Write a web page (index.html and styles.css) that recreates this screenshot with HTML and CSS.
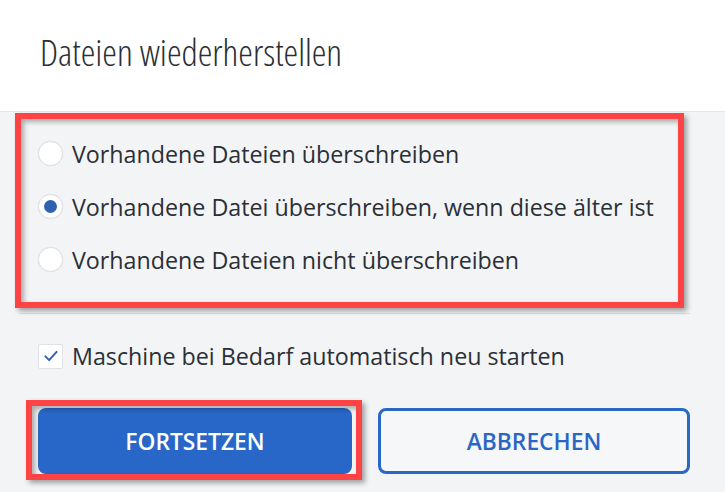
FILE: index.html
```html
<!DOCTYPE html>
<html lang="de">
<head>
<meta charset="utf-8">
<title>Dateien wiederherstellen</title>
<link rel="stylesheet" href="styles.css">
</head>
<body>
<div class="dialog">
  <header class="head">
    <h1 class="title">Dateien wiederherstellen</h1>
  </header>
  <section class="options">
    <label class="opt"><span class="radio"></span><span class="label">Vorhandene Dateien überschreiben</span></label>
    <label class="opt"><span class="radio radio-on"></span><span class="label">Vorhandene Datei überschreiben, wenn diese älter ist</span></label>
    <label class="opt"><span class="radio"></span><span class="label">Vorhandene Dateien nicht überschreiben</span></label>
  </section>
  <label class="check">
    <span class="box"><svg viewBox="0 0 24 24" width="18" height="18"><path d="M4.5 12.5 L9.5 17.5 L19.5 6.5" fill="none" stroke="#2f62b3" stroke-width="2.6" stroke-linecap="round" stroke-linejoin="round"/></svg></span>
    <span class="label">Maschine bei Bedarf automatisch neu starten</span>
  </label>
  <div class="actions">
    <button class="btn btn-primary">FORTSETZEN</button>
    <button class="btn btn-secondary">ABBRECHEN</button>
  </div>
  <div class="mark mark-options"></div>
  <div class="mark mark-continue"></div>
</div>
</body>
</html>
```
FILE: styles.css
```css
* { box-sizing: border-box; }
html, body { margin: 0; padding: 0; }
body {
  width: 725px;
  height: 492px;
  overflow: hidden;
  background: #f3f4f6;
  font-family: "Open Sans", "Noto Sans", sans-serif;
  color: #2b2f36;
}
.dialog {
  position: relative;
  width: 725px;
  height: 492px;
}
.head {
  height: 112px;
  background: #ffffff;
  border-bottom: 1px solid #dfe6f3;
  padding: 26px 0 0 40px;
}
.title {
  margin: 0;
  font-size: 37px;
  font-weight: 300;
  font-stretch: 75%;
  line-height: 52px;
  color: #2b2f36;
}
.options {
  margin: 0 35px 0 20px;
  padding: 15px 0 27px 18px;
  border-bottom: 1px solid #d9e1ee;
  display: flex;
  flex-direction: column;
}
.opt {
  height: 53px;
  display: flex;
  align-items: center;
  gap: 9px;
}
.label {
  font-size: 23.25px;
  line-height: 30px;
  color: #2b2f36;
}
.radio {
  width: 25px;
  height: 25px;
  border-radius: 50%;
  background: #ffffff;
  border: 1px solid #dfe2e7;
  box-shadow: 0 0 1px rgba(0,0,0,0.12);
  display: flex;
  align-items: center;
  justify-content: center;
  flex: none;
}
.radio-on::after {
  content: "";
  width: 13px;
  height: 13px;
  border-radius: 50%;
  background: #2f62ad;
}
.check {
  margin: 27px 0 0 38px;
  height: 30px;
  display: flex;
  align-items: center;
  gap: 9px;
}
.box {
  width: 25px;
  height: 25px;
  background: #ffffff;
  border: 1px solid #dfe2e7;
  border-radius: 2px;
  display: flex;
  align-items: center;
  justify-content: center;
  flex: none;
}
.actions {
  margin: 37px 0 0 38px;
  display: flex;
  gap: 26px;
}
.btn {
  height: 66px;
  border-radius: 8px;
  font-family: "Open Sans", "Noto Sans", sans-serif;
  font-size: 22.8px;
  font-weight: 600;
  cursor: pointer;
}
.btn-primary {
  width: 314px;
  background: #2867c7;
  color: #ffffff;
  border: none;
}
.btn-secondary {
  width: 312px;
  background: #f6f7f9;
  color: #2a67c4;
  border: 3px solid #2a68c6;
}
.mark {
  position: absolute;
  border: 6px solid #fd4344;
  box-shadow: 3px 3px 5px rgba(0,0,0,0.35), inset 3px 3px 5px rgba(0,0,0,0.3);
  pointer-events: none;
}
.mark-options {
  left: 15px;
  top: 113px;
  width: 669px;
  height: 195px;
}
.mark-continue {
  left: 26px;
  top: 400px;
  width: 336px;
  height: 80px;
}
```
